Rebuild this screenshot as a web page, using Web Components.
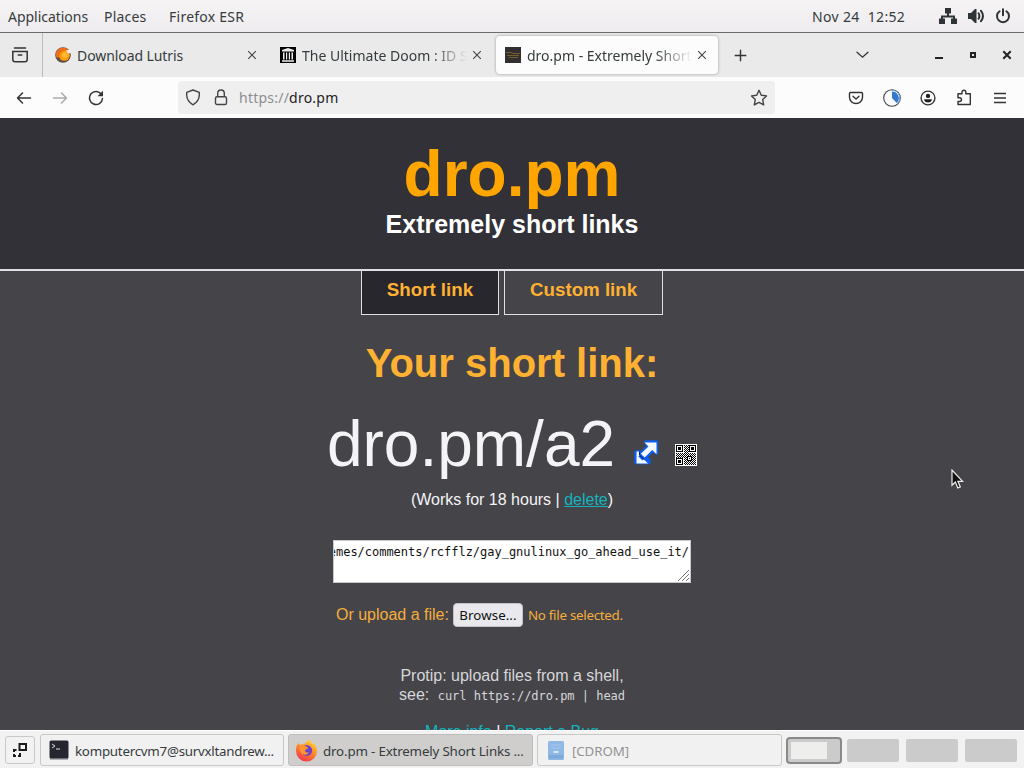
<!DOCTYPE html>
<html lang="en">
<head>
<meta charset="utf-8">
<title>dro.pm - Extremely Short Links</title>
<style>
  body {
    margin: 0;
    width: 1024px;
    height: 768px;
    overflow: hidden;
    font-family: "Noto Sans", "Open Sans", sans-serif;
    color: #363b3d;
  }
</style>
</head>
<body>
<desktop-shell></desktop-shell>

<script>
const icons = {
  network: `<svg width="18" height="17" viewBox="0 0 18 17"><path fill="#2e3436" d="M6 0h6v5.500h-2v2h6v3h2v5.500h-6v-5.500h2v-1H4v1h2v5.500H0v-5.500h2v-3h6v-2H6z"/></svg>`,
  sound: `<svg width="18" height="16" viewBox="0 0 18 16"><path fill="#2e3436" d="M1 5h3l4-4h1.500v14H8l-4-4H1z"/><path fill="none" stroke="#2e3436" stroke-width="2" stroke-linecap="round" d="M11.500 5.300q1.800 2.700 0 5.400M14 2.800q4 5.200 0 10.400"/></svg>`,
  power: `<svg width="16" height="16" viewBox="0 0 16 16"><path fill="none" stroke="#2e3436" stroke-width="2" stroke-linecap="round" d="M8 1.300v6M4.600 3.200a6 6 0 1 0 6.800 0"/></svg>`,
  archive: `<svg width="18" height="18" viewBox="0 0 18 18"><path fill="none" stroke="#333" stroke-width="1.500" stroke-linecap="round" d="M3.500 2h11M1.800 5.500h14.400v8a2.300 2.300 0 0 1-2.300 2.300H4.100a2.300 2.300 0 0 1-2.300-2.300zM7.200 9h3.600"/></svg>`,
  lutris: `<svg width="16" height="16" viewBox="0 0 16 16"><circle cx="8" cy="8" r="7.800" fill="#5e4d48"/><circle cx="9.300" cy="8.300" r="5.500" fill="#ff9d05"/><path fill="#e8701c" d="M.8 6Q3 .3 9 .8q4.500.6 5.500 4-3.500-2-6-1L5 6.500 4 10l-2 1q-1.500-2-1.200-5z"/><circle cx="9.800" cy="8" r="2.700" fill="#ffbd3b"/><path fill="#eee" d="M11 3.500l5-1v3.500l-3 .5z"/></svg>`,
  archiveOrg: `<svg width="16" height="16" viewBox="0 0 16 16"><path fill="#000" d="M0 0h16v16H0z"/><path fill="#eee" d="M8 1l6 2v1.500H2V3zM3 5.500h1.500v7H3zM6 5.500h1.200v7H6zM8.800 5.500H10v7H8.800zM11.500 5.500H13v7h-1.500zM2 13.300h12v1.500H2z"/></svg>`,
  dropm: `<svg width="16" height="16" viewBox="0 0 16 16"><path fill="#332f31" d="M0 0h16v16H0z"/><path fill="none" stroke="#75602d" stroke-width="1" d="M1 5.500h5l2 1h7M2 8.500h12M4 10.500h9"/></svg>`,
  close: `<svg width="10" height="10" viewBox="0 0 10 10"><path fill="none" stroke="#444" stroke-width="1.100" d="M1.200 1.200l7.600 7.600M8.800 1.200L1.200 8.800"/></svg>`,
  plus: `<svg width="13" height="13" viewBox="0 0 13 13"><path fill="none" stroke="#333" stroke-width="1.400" d="M6.500.7v11.600M.7 6.500h11.600"/></svg>`,
  chevron: `<svg width="13" height="8" viewBox="0 0 13 8"><path fill="none" stroke="#333" stroke-width="1.300" stroke-linecap="round" d="M1 1.200l5.500 5L12 1.200"/></svg>`,
  minimize: `<svg width="10" height="10" viewBox="0 0 10 10"><path fill="#222" d="M1 7h8v2H1z"/></svg>`,
  maximize: `<svg width="10" height="10" viewBox="0 0 10 10"><path fill="none" stroke="#222" stroke-width="2" d="M3 3h4v4H3z"/></svg>`,
  closeWindow: `<svg width="10" height="10" viewBox="0 0 10 10"><path fill="none" stroke="#222" stroke-width="2" d="M1.300 1.300l7.400 7.400M8.700 1.300L1.300 8.700"/></svg>`,
  back: `<svg width="16" height="14" viewBox="0 0 16 14"><path fill="none" stroke="#333" stroke-width="1.500" stroke-linecap="round" stroke-linejoin="round" d="M14.500 7H1.500M6.500 2l-5 5 5 5"/></svg>`,
  forward: `<svg width="16" height="14" viewBox="0 0 16 14"><path fill="none" stroke="#aaa" stroke-width="1.500" stroke-linecap="round" stroke-linejoin="round" d="M1.500 7h13M9.500 2l5 5-5 5"/></svg>`,
  reload: `<svg width="16" height="16" viewBox="0 0 16 16"><path fill="none" stroke="#333" stroke-width="1.500" stroke-linecap="round" d="M13.500 4.500A6.500 6.500 0 1 0 14.500 8.500"/><path fill="#333" d="M15 .8v5.500H9.500z"/></svg>`,
  shield: `<svg width="16" height="17" viewBox="0 0 16 17"><path fill="none" stroke="#444" stroke-width="1.400" stroke-linejoin="round" d="M8 1l6.300 2.300v3Q14 12.500 8 15.800 2 12.500 1.700 6.300v-3z"/></svg>`,
  lock: `<svg width="14" height="17" viewBox="0 0 14 17"><path fill="none" stroke="#444" stroke-width="1.400" d="M3.700 8V4.300a3.300 3.300 0 0 1 6.600 0V8"/><rect x="1.500" y="7.800" width="11" height="7.700" rx="1.600" fill="none" stroke="#444" stroke-width="1.400"/></svg>`,
  star: `<svg width="18" height="17" viewBox="0 0 18 17"><path fill="none" stroke="#444" stroke-width="1.400" stroke-linejoin="round" d="M9 1.300l2.300 4.900 5.200.7-3.800 3.700 1 5.300L9 13.300l-4.700 2.600 1-5.300L1.500 6.900l5.200-.7z"/></svg>`,
  pocket: `<svg width="16" height="14" viewBox="0 0 16 14"><path fill="none" stroke="#333" stroke-width="1.400" stroke-linecap="round" stroke-linejoin="round" d="M2.500 1.500h11A1 1 0 0 1 14.500 2.500v3.700a6.500 6.300 0 0 1-13 0V2.500A1 1 0 0 1 2.500 1.500zM5 5.200L8 8l3-2.800"/></svg>`,
  halfCircle: `<svg width="18" height="18" viewBox="0 0 18 18"><circle cx="9" cy="9" r="8.300" fill="#fafafa" stroke="#444" stroke-width="1.100"/><path fill="#3278cd" d="M9 2.500a6.700 6.700 0 0 1 4.800 11.400L9 9z"/><path fill="none" stroke="#65a5e5" stroke-width="1" d="M9 1.200a7.800 7.800 0 0 1 5.400 13.500"/></svg>`,
  account: `<svg width="16" height="16" viewBox="0 0 16 16"><circle cx="8" cy="8" r="6.900" fill="none" stroke="#333" stroke-width="1.400"/><circle cx="8" cy="5.900" r="2.200" fill="#222"/><path fill="#222" d="M4 9.300h8q-.6 3.200-4 3.200t-4-3.200z"/></svg>`,
  extension: `<svg width="16" height="17" viewBox="0 0 16 17"><path fill="none" stroke="#333" stroke-width="1.400" stroke-linejoin="round" d="M2 7.500V4.700h4V3.200a1.900 1.900 0 0 1 3.800 0v1.500h4.500v10.800H2v-3h1.600a1.900 1.900 0 0 0 0-3.800H2z"/></svg>`,
  menu: `<svg width="14" height="12" viewBox="0 0 14 12"><path fill="none" stroke="#333" stroke-width="1.300" d="M1 1.500h12M1 6h12M1 10.500h12"/></svg>`,
  openLink: `<svg width="28" height="28" viewBox="0 0 28 28"><path fill="#0b5cf0" stroke="#0b5cf0" stroke-width="3.500" stroke-linejoin="round" d="M14 3h10.500v11l-3.500-3-7 7 3 3.500v2H4V13h3l2 2 7.500-8z"/><path fill="#f4f8ff" d="M12.500 3.500h12v11.700l-4.200-4.100-7.600 7.500-3.900-3.800 7.700-7.300zM4.500 12.500h3v3.800l-1.100 1.100 4 4 1.400-1.200 4.200 4.200h-11.500z"/><path fill="none" stroke="#061f58" stroke-width="1" d="M7.500 12.500v3.500l4.800 4.600"/></svg>`,
  desktop: `<svg width="16" height="16" viewBox="0 0 16 16"><path fill="none" stroke="#1b1b1b" stroke-width="2" d="M7.500 2h6.500v6H7.500zM4.500 8H2v2M2 12v2h2M6 14h2v-3"/></svg>`,
  terminal: `<svg width="20" height="20" viewBox="0 0 20 20"><rect x=".5" y=".5" width="19" height="18" rx="1.500" fill="#262631"/><path fill="#70707a" d="M1 18h18v1.500H1z"/><path fill="none" stroke="#ddd" stroke-width="1" d="M3 4l3 2-3 2M7 9h4"/></svg>`,
  firefox: `<svg width="23" height="23" viewBox="0 0 23 23"><defs><linearGradient id="g" x1=".8" y1="0" x2=".3" y2="1"><stop offset="0" stop-color="#ffdf3d"/><stop offset=".4" stop-color="#ff9a25"/><stop offset="1" stop-color="#f5324c"/></linearGradient></defs><path fill="url(#g)" d="M3 4l2 2q2-1 4-1Q12 4 14 0q2 2 3 5l2-1q3 4 3 8a10.500 10.500 0 0 1-21 0q0-5 2-8z"/><circle cx="11.800" cy="11.500" r="5.400" fill="#7044c8"/><path fill="#ff9630" d="M4.500 7.500q4-2 7 .3 2 .3 1.500 1.500l-3 1.600q0 3 4 2.500-3 4-7 1.300-3-3-2.500-7.200z"/></svg>`,
  disc: `<svg width="18" height="21" viewBox="0 0 18 21"><rect x="1" y="1" width="16" height="19" rx="1.500" fill="#8fb8e6"/><path fill="#7fa9d9" d="M2 15h14v3.500H2z"/><path fill="none" stroke="#a8c8ec" d="M4 5h10M4 8h10"/><path fill="none" stroke="#f2f6fa" stroke-width="1.500" d="M6.500 12h5"/></svg>`,
  cursor: `<svg width="13" height="20" viewBox="0 0 13 20"><path fill="#111" stroke="#eee" stroke-width="1.200" d="M1 1v15.300l3.400-3.200 2.400 5.800 2.500-1-2.400-5.600h4.700z"/></svg>`
};

// 22x22 code with three finder squares and one alignment square
function qrCode() {
  let cells = '';
  for (let y = 0; y < 20; y++) {
    for (let x = 0; x < 20; x++) {
      if ((x + y) % 2 === 0) cells += `M${x + 1} ${y + 1}h1v1h-1z`;
    }
  }
  const finder = (x, y) => `<path fill="#fff" d="M${x} ${y}h8v8h-8z"/><path fill="#000" d="M${x} ${y}h7v7h-7z"/><path fill="#fff" d="M${x + 1} ${y + 1}h5v5h-5z"/><path fill="#000" d="M${x + 2} ${y + 2}h3v3h-3z"/>`;
  return `<svg width="22" height="22" viewBox="0 0 22 22" shape-rendering="crispEdges"><path fill="#fff" d="M0 0h22v22H0z"/><path fill="#000" d="${cells}"/>${finder(1, 1)}${finder(14, 1)}${finder(1, 14)}<path fill="#000" d="M12 12h5v5h-5z"/><path fill="#fff" d="M13 13h3v3h-3z"/><path fill="#000" d="M14 14h1v1h-1z"/></svg>`;
}
icons.qr = qrCode();

class UiIcon extends HTMLElement {
  constructor() {
    super();
    this.attachShadow({ mode: "open" });
  }
  connectedCallback() {
    this.shadowRoot.innerHTML = `
      <style>
        :host {
          display: flex;
          flex: none;
          justify-content: center;
          align-items: center;
        }
        svg { display: block; flex: none; }
      </style>
      ${icons[this.getAttribute('name')]}
    `;
  }
}
customElements.define("ui-icon", UiIcon);

class TopPanel extends HTMLElement {
  constructor() {
    super();
    this.attachShadow({ mode: "open" });
    this.shadowRoot.innerHTML = `
      <style>
        :host {
          display: flex;
          align-items: center;
          height: 32px;
          padding: 0 13px 0 8px;
          background: linear-gradient(#f5f3f4, #eeecee);
          border-bottom: 1px solid #6d6b6c;
          font-size: 14px;
          white-space: pre;
        }
        span { padding-top: 1px; line-height: 20px; }
        .apps { width: 96px; letter-spacing: -.03px; }
        .places { width: 65px; letter-spacing: .2px; }
        .app { flex: 1; letter-spacing: .25px; }
        .clock { width: 127px; letter-spacing: .35px; }
        .tray { display: flex; gap: 10px; }
      </style>
      <span class="apps">Applications</span>
      <span class="places">Places</span>
      <span class="app">Firefox ESR</span>
      <span class="clock">Nov 24  12:52</span>
      <div class="tray">
        <ui-icon name="network"></ui-icon>
        <ui-icon name="sound"></ui-icon>
        <ui-icon name="power"></ui-icon>
      </div>
    `;
  }
}
customElements.define("top-panel", TopPanel);

class BrowserTab extends HTMLElement {
  constructor() {
    super();
    this.attachShadow({ mode: "open" });
  }
  connectedCallback() {
    this.shadowRoot.innerHTML = `
      <style>
        :host {
          display: flex;
          align-items: center;
          box-sizing: border-box;
          height: 38px;
          width: 225px;
          padding: 0 14px 0 9px;
          font-size: 14px;
          border-radius: 4px;
        }
        :host([active]) {
          width: 222px;
          padding-right: 11px;
          margin-right: 1px;
          background: #fcfcfc;
          box-shadow: 0 0 3px #999;
        }
        .title {
          flex: 1;
          margin: 0 5px 0 6px;
          padding-top: 1px;
          line-height: 20px;
          white-space: nowrap;
          overflow: hidden;
          letter-spacing: var(--tracking, 0);
        }
        :host([fade]) .title {
          -webkit-mask-image: linear-gradient(90deg, #000 78%, transparent 100%);
          mask-image: linear-gradient(90deg, #000 78%, transparent 100%);
        }
      </style>
      <ui-icon name="${this.getAttribute('icon')}"></ui-icon>
      <div class="title"><slot></slot></div>
      <ui-icon name="close"></ui-icon>
    `;
  }
}
customElements.define("browser-tab", BrowserTab);

class TabStrip extends HTMLElement {
  constructor() {
    super();
    this.attachShadow({ mode: "open" });
    this.shadowRoot.innerHTML = `
      <style>
        :host {
          display: flex;
          align-items: center;
          height: 44px;
          background: #eaeaeb;
        }
        .view {
          width: 43px;
          height: 100%;
          padding-right: 2px;
          box-sizing: border-box;
          border-right: 1px solid #bcbcbd;
          margin-right: 3px;
        }
        .new { width: 42px; }
        .list { margin-left: auto; width: 36px; }
        .controls { display: flex; margin-left: 42px; }
        .controls ui-icon { width: 34px; }
      </style>
      <ui-icon class="view" name="archive"></ui-icon>
      <browser-tab icon="lutris" style="--tracking:-.08px">Download Lutris</browser-tab>
      <browser-tab icon="archiveOrg" fade>The Ultimate Doom : ID Software</browser-tab>
      <browser-tab icon="dropm" active fade>dro.pm - Extremely Short Links</browser-tab>
      <ui-icon class="new" name="plus"></ui-icon>
      <ui-icon class="list" name="chevron"></ui-icon>
      <div class="controls">
        <ui-icon name="minimize"></ui-icon>
        <ui-icon name="maximize"></ui-icon>
        <ui-icon name="closeWindow"></ui-icon>
      </div>
    `;
  }
}
customElements.define("tab-strip", TabStrip);

class NavBar extends HTMLElement {
  constructor() {
    super();
    this.attachShadow({ mode: "open" });
    this.shadowRoot.innerHTML = `
      <style>
        :host {
          display: flex;
          align-items: center;
          height: 41px;
          padding: 0 6px;
          background: #fcfcfc;
          box-sizing: border-box;
        }
        .buttons { display: flex; }
        .buttons ui-icon { width: 36px; }
        .address {
          display: flex;
          align-items: center;
          box-sizing: border-box;
          width: 597px;
          height: 33px;
          margin: 0 63px 0 64px;
          padding: 0 8px 0 7px;
          border-radius: 4px;
          background: #efeff0;
          font-size: 14px;
        }
        .address ui-icon { width: 16px; }
        .lock { margin: 0 10px 0 12px; }
        .url { flex: 1; color: #8d8d90; line-height: 20px; letter-spacing: .23px; }
        .url b { font-weight: normal; color: #222; }
      </style>
      <div class="buttons">
        <ui-icon name="back"></ui-icon>
        <ui-icon name="forward"></ui-icon>
        <ui-icon name="reload"></ui-icon>
      </div>
      <div class="address">
        <ui-icon name="shield"></ui-icon>
        <ui-icon class="lock" name="lock"></ui-icon>
        <span class="url">https://<b>dro.pm</b></span>
        <ui-icon name="star"></ui-icon>
      </div>
      <div class="buttons">
        <ui-icon name="pocket"></ui-icon>
        <ui-icon name="halfCircle"></ui-icon>
        <ui-icon name="account"></ui-icon>
        <ui-icon name="extension"></ui-icon>
        <ui-icon name="menu"></ui-icon>
      </div>
    `;
  }
}
customElements.define("nav-bar", NavBar);

class LinkPage extends HTMLElement {
  constructor() {
    super();
    this.attachShadow({ mode: "open" });
    this.shadowRoot.innerHTML = `
      <style>
        :host {
          display: block;
          height: 612px;
          overflow: hidden;
          background: #454449;
          color: #f4f4f6;
          font: 16px/18px "Liberation Sans", Arial, sans-serif;
          text-align: center;
        }
        header {
          box-sizing: border-box;
          height: 153px;
          padding-top: 20px;
          background: #323137;
          border-bottom: 2px solid #dfe0e5;
        }
        h1, h2, h3, p { margin: 0; }
        h1 { margin-bottom: 1px; font-size: 64px; line-height: 72px; color: #ffa500; }
        h3 { font-size: 25px; line-height: 26px; color: #fff; }
        main {
          display: flex;
          flex-direction: column;
          align-items: center;
        }
        nav { display: flex; gap: 5px; }
        nav a {
          box-sizing: border-box;
          height: 44px;
          padding: 7px 25px 0;
          border: 1px solid #dfe0e5;
          border-top: 0;
          font-size: 18.72px;
          font-weight: bold;
          line-height: 24px;
          color: #ffb132;
        }
        nav .current { background: #28272e; }
        h2 { margin-top: 25px; font-size: 40px; line-height: 46px; color: #ffb132; }
        .link {
          display: flex;
          margin-top: 22px;
          font-size: 64px;
          line-height: 72px;
        }
        .link ui-icon { align-self: flex-start; }
        .open { margin: 31px 0 0 17px; }
        .qr { margin: 36px 0 0 15px; }
        .note { margin-top: 11px; }
        u { color: #12b5bf; }
        .text {
          display: flex;
          position: relative;
          justify-content: flex-end;
          box-sizing: border-box;
          width: 358px;
          height: 43px;
          margin-top: 31px;
          padding: 4px 1px;
          overflow: hidden;
          background: #fff;
          border: 1px solid #c9c9cc;
          color: #111;
          font: 12px/15px "DejaVu Sans Mono", monospace;
          letter-spacing: -.02px;
          white-space: nowrap;
        }
        .text svg { position: absolute; right: 1px; bottom: 1px; }
        .upload {
          display: flex;
          align-items: center;
          box-sizing: border-box;
          width: 358px;
          height: 24px;
          margin-top: 20px;
          padding-left: 3px;
          color: #f5ae3c;
          white-space: nowrap;
        }
        button {
          box-sizing: border-box;
          width: 70px;
          height: 24px;
          margin: 0 5px 0 4px;
          padding: 0;
          border: 1px solid #c3c3cc;
          border-radius: 4px;
          background: #e9e9ed;
          color: #111;
          font: 13.33px/20px "Noto Sans", sans-serif;
          letter-spacing: .05px;
        }
        .file { font: 13.33px/20px "Noto Sans", sans-serif; letter-spacing: -.27px; }
        .protip { margin-top: 39px; line-height: 19px; color: #d6d6d9; }
        code { margin-left: 4px; font: 12px "DejaVu Sans Mono", monospace; letter-spacing: -.02px; }
        .more { margin-top: 19px; }
      </style>
      <header>
        <h1>dro.pm</h1>
        <h3>Extremely short links</h3>
      </header>
      <main>
        <nav>
          <a class="current">Short link</a>
          <a>Custom link</a>
        </nav>
        <h2>Your short link:</h2>
        <div class="link">
          <span>dro.pm/a2</span>
          <ui-icon class="open" name="openLink"></ui-icon>
          <ui-icon class="qr" name="qr"></ui-icon>
        </div>
        <p class="note">(Works for 18 hours | <u>delete</u>)</p>
        <div class="text">
          <span>emes/comments/rcfflz/gay_gnulinux_go_ahead_use_it/</span>
          <svg width="11" height="11" viewBox="0 0 11 11"><path fill="none" stroke="#777" d="M0 11L11 0M4 11l7-7M8 11l3-3"/></svg>
        </div>
        <div class="upload">
          <span>Or upload a file:</span>
          <button>Browse...</button>
          <span class="file">No file selected.</span>
        </div>
        <p class="protip">Protip: upload files from a shell,<br>see: <code>curl https://dro.pm | head</code></p>
        <p class="more"><u>More info</u> | <u>Report a Bug</u></p>
      </main>
    `;
  }
}
customElements.define("link-page", LinkPage);

class TaskButton extends HTMLElement {
  constructor() {
    super();
    this.attachShadow({ mode: "open" });
  }
  connectedCallback() {
    this.shadowRoot.innerHTML = `
      <style>
        :host {
          display: flex;
          align-items: center;
          gap: 5px;
          box-sizing: border-box;
          width: 245px;
          height: 32px;
          padding-left: 6px;
          border: 1px solid #c9c8c7;
          border-radius: 3px;
          background: #f2f1f1;
          font-size: 13.33px;
          line-height: 20px;
          white-space: nowrap;
        }
        :host([active]) { background: #cfcecd; border-color: #bfbebd; }
        :host([minimized]) { color: #929495; }
        ui-icon { width: 23px; }
        span { padding-top: 1px; letter-spacing: var(--tracking, 0); }
      </style>
      <ui-icon name="${this.getAttribute('icon')}"></ui-icon>
      <span><slot></slot></span>
    `;
  }
}
customElements.define("task-button", TaskButton);

class TaskBar extends HTMLElement {
  constructor() {
    super();
    this.attachShadow({ mode: "open" });
    this.shadowRoot.innerHTML = `
      <style>
        :host {
          display: flex;
          align-items: center;
          box-sizing: border-box;
          height: 38px;
          padding: 1px 7px 0 5px;
          border-top: 1px solid #fff;
          background: #f3f2f3;
        }
        .desktop {
          box-sizing: border-box;
          width: 30px;
          height: 28px;
          margin-right: 5px;
          border: 1px solid #c9c8c7;
          border-radius: 3px;
        }
        .tasks { display: flex; gap: 4px; }
        .tasks :first-child { width: 244px; }
        .spaces { display: flex; align-items: center; gap: 7px; margin-left: auto; }
        .spaces div { width: 52px; height: 23px; background: #cbcbcb; border-radius: 2px; }
        .spaces .current {
          display: flex;
          box-sizing: border-box;
          width: 56px;
          height: 27px;
          margin-right: -2px;
          padding: 3px;
          border: 2px solid #898989;
          border-radius: 4px;
        }
        .current i { width: 36px; background: #eeeeec; }
      </style>
      <ui-icon class="desktop" name="desktop"></ui-icon>
      <div class="tasks">
        <task-button icon="terminal" style="--tracking:-.25px">komputercvm7@survxltandrew...</task-button>
        <task-button icon="firefox" active style="--tracking:-.17px">dro.pm - Extremely Short Links ...</task-button>
        <task-button icon="disc" minimized style="--tracking:-.1px">[CDROM]</task-button>
      </div>
      <div class="spaces">
        <div class="current"><i></i></div>
        <div></div>
        <div></div>
        <div></div>
      </div>
    `;
  }
}
customElements.define("task-bar", TaskBar);

class DesktopShell extends HTMLElement {
  constructor() {
    super();
    this.attachShadow({ mode: "open" });
    this.shadowRoot.innerHTML = `
      <style>
        :host {
          display: flex;
          flex-direction: column;
          position: relative;
          width: 1024px;
          height: 768px;
        }
        .cursor { position: absolute; left: 951px; top: 469px; }
      </style>
      <top-panel></top-panel>
      <tab-strip></tab-strip>
      <nav-bar></nav-bar>
      <link-page></link-page>
      <task-bar></task-bar>
      <ui-icon class="cursor" name="cursor"></ui-icon>
    `;
  }
}
customElements.define("desktop-shell", DesktopShell);
</script>
</body>
</html>
